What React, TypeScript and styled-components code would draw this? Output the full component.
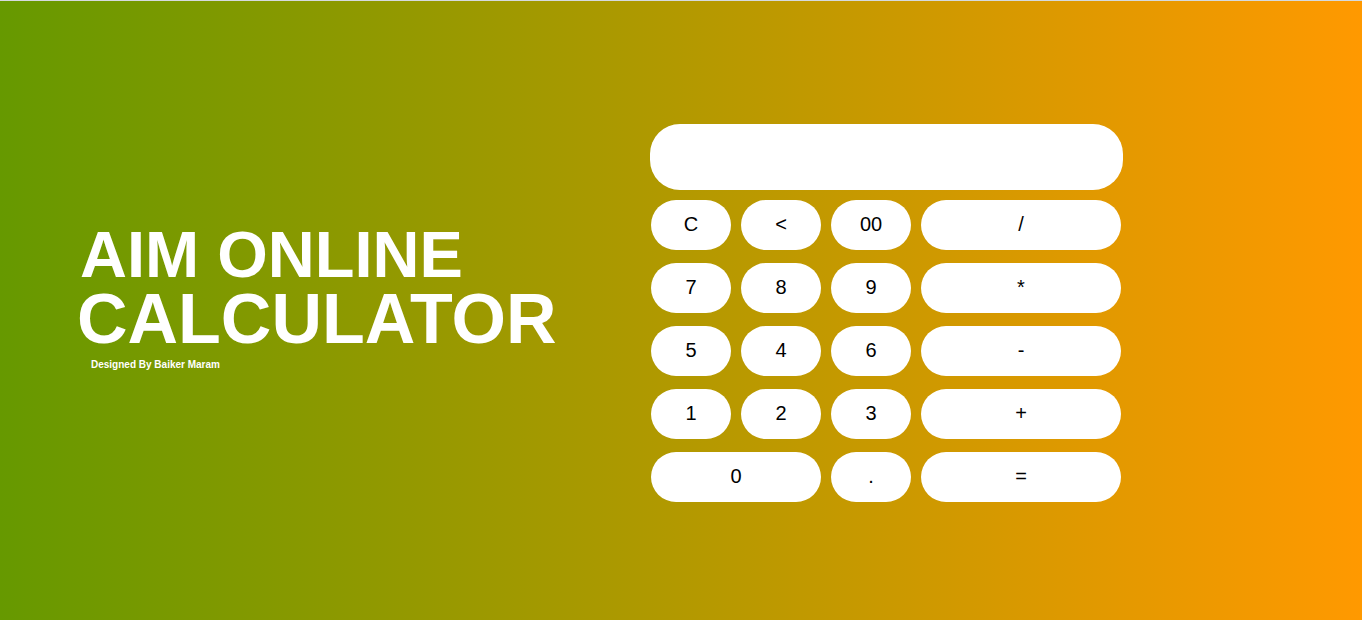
import { useState } from "react";
import styled, { createGlobalStyle } from "styled-components";

const GlobalStyle = createGlobalStyle`
  * { box-sizing: border-box; }
  body {
    margin: 0;
    font-family: Arial, "Liberation Sans", sans-serif;
  }
`;

const Page = styled.main`
  display: grid;
  grid-template-columns: 650fr 712fr;
  align-items: center;
  min-height: 100vh;
  border-top: 1px solid #d5dade;
  background: linear-gradient(to right, #669900, #ff9900) padding-box;
  color: #fff;
`;

const Intro = styled.header`
  padding: 0 0 28px 77px;
  white-space: nowrap;
`;

const Title = styled.h1`
  margin: 0;
  font-weight: bold;
`;

const TitleLine = styled.span<{ $size: number; $indent?: number }>`
  display: block;
  padding-left: ${({ $indent = 0 }) => $indent}px;
  font-size: ${({ $size }) => $size}px;
  line-height: 64px;
`;

const Credit = styled.p`
  margin: 8px 0 0 14px;
  font-size: 10px;
  line-height: 12px;
  font-weight: bold;
`;

const Calculator = styled.section`
  width: 473px;
  padding-top: 4px;
`;

const Display = styled.input`
  display: block;
  width: 100%;
  height: 66px;
  padding: 0 28px;
  border: 0;
  border-radius: 30px;
  outline: 0;
  background: #fff;
  color: #000;
  font: 30px Arial, "Liberation Sans", sans-serif;
  text-align: right;
`;

const Keypad = styled.div`
  display: grid;
  grid-template-columns: repeat(3, 80px) 200px;
  grid-auto-rows: 50px;
  gap: 13px 10px;
  margin: 10px 0 0 1px;
`;

const Key = styled.button<{ $span: number }>`
  grid-column: span ${({ $span }) => $span};
  padding: 0;
  border: 0;
  border-radius: 25px;
  background: #fff;
  color: #000;
  font: 20px Arial, "Liberation Sans", sans-serif;
  cursor: pointer;
`;

const keys = [
  "C", "<", "00", "/",
  "7", "8", "9", "*",
  "5", "4", "6", "-",
  "1", "2", "3", "+",
  "0", ".", "=",
];

const precedence: Record<string, number> = { "+": 1, "-": 1, "*": 2, "/": 2 };

function evaluate(expression: string): string {
  const tokens = expression.match(/\d*\.?\d+|[-+*/]/g) ?? [];
  const values: number[] = [];
  const operators: string[] = [];
  const reduce = () => {
    const right = values.pop() ?? 0;
    const left = values.pop() ?? 0;
    const operator = operators.pop();
    if (operator === "+") values.push(left + right);
    else if (operator === "-") values.push(left - right);
    else if (operator === "*") values.push(left * right);
    else values.push(left / right);
  };
  for (const token of tokens) {
    if (token in precedence) {
      while (
        operators.length &&
        precedence[operators[operators.length - 1]] >= precedence[token]
      ) {
        reduce();
      }
      operators.push(token);
    } else {
      values.push(Number(token));
    }
  }
  while (operators.length) reduce();
  return values.length ? String(values[0]) : "";
}

export default function App() {
  const [value, setValue] = useState("");

  const press = (key: string) => {
    if (key === "C") setValue("");
    else if (key === "<") setValue(value.slice(0, -1));
    else if (key === "=") setValue(evaluate(value));
    else setValue(value + key);
  };

  return (
    <>
      <GlobalStyle />
      <Page>
        <Intro>
          <Title>
            <TitleLine $size={65} $indent={3}>AIM ONLINE</TitleLine>
            <TitleLine $size={70}>CALCULATOR</TitleLine>
          </Title>
          <Credit>Designed By Baiker Maram</Credit>
        </Intro>
        <Calculator aria-label="Calculator">
          <Display aria-label="Result" value={value} readOnly />
          <Keypad>
            {keys.map((key) => (
              <Key
                key={key}
                type="button"
                $span={key === "0" ? 2 : 1}
                onClick={() => press(key)}
              >
                {key}
              </Key>
            ))}
          </Keypad>
        </Calculator>
      </Page>
    </>
  );
}
